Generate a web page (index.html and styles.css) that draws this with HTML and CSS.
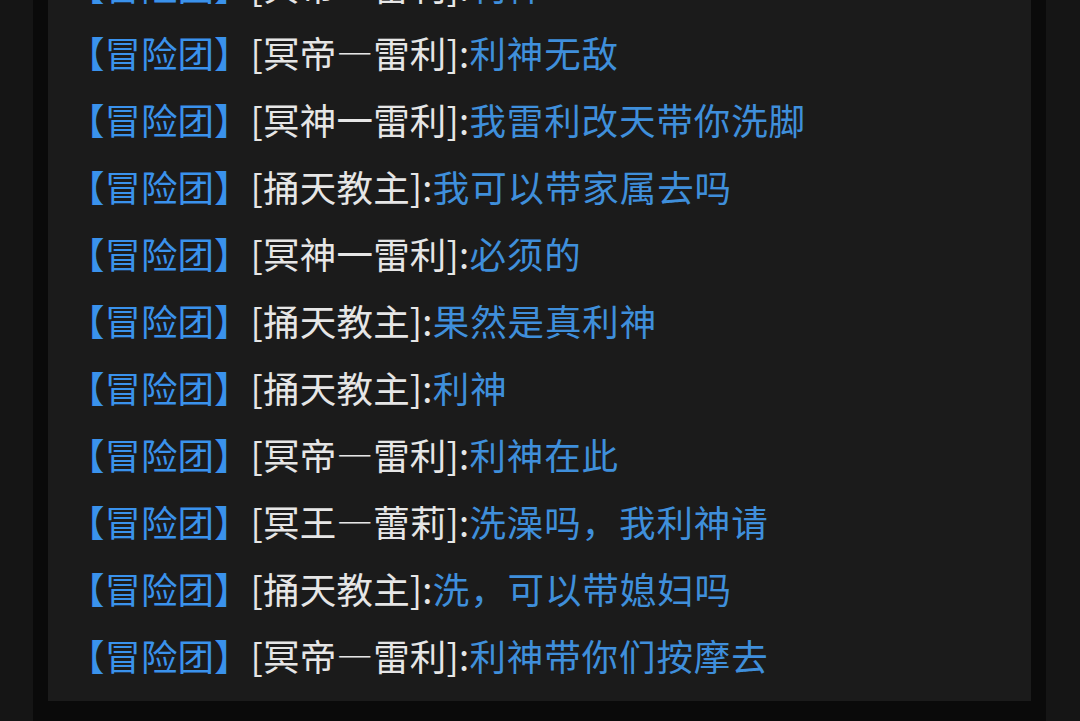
FILE: index.html
```html
<!DOCTYPE html>
<html lang="zh-CN">
<head>
  <meta charset="UTF-8">
  <meta name="viewport" content="width=device-width, initial-scale=1.0">
  <title>冒险团频道</title>
  <link rel="stylesheet" href="styles.css">
</head>
<body>
<div class="screen">
  <div class="frame">
    <div class="chat-panel">
      <div class="msg"><span class="tag">【冒险团】</span><span class="who">[冥帝—雷利]:</span><span class="text">利神</span></div>
      <div class="msg"><span class="tag">【冒险团】</span><span class="who">[冥帝—雷利]:</span><span class="text">利神无敌</span></div>
      <div class="msg"><span class="tag">【冒险团】</span><span class="who">[冥神一雷利]:</span><span class="text">我雷利改天带你洗脚</span></div>
      <div class="msg"><span class="tag">【冒险团】</span><span class="who">[捅天教主]:</span><span class="text">我可以带家属去吗</span></div>
      <div class="msg"><span class="tag">【冒险团】</span><span class="who">[冥神一雷利]:</span><span class="text">必须的</span></div>
      <div class="msg"><span class="tag">【冒险团】</span><span class="who">[捅天教主]:</span><span class="text">果然是真利神</span></div>
      <div class="msg"><span class="tag">【冒险团】</span><span class="who">[捅天教主]:</span><span class="text">利神</span></div>
      <div class="msg"><span class="tag">【冒险团】</span><span class="who">[冥帝—雷利]:</span><span class="text">利神在此</span></div>
      <div class="msg"><span class="tag">【冒险团】</span><span class="who">[冥王—蕾莉]:</span><span class="text">洗澡吗，我利神请</span></div>
      <div class="msg"><span class="tag">【冒险团】</span><span class="who">[捅天教主]:</span><span class="text">洗，可以带媳妇吗</span></div>
      <div class="msg"><span class="tag">【冒险团】</span><span class="who">[冥帝—雷利]:</span><span class="text">利神带你们按摩去</span></div>
    </div>
  </div>
</div>
</body>
</html>
```

FILE: styles.css
```css
html, body {
  margin: 0;
  height: 100%;
  overflow: hidden;
}

body {
  background-color: #151515;
  font-family: "Noto Sans CJK SC", "Noto Sans", sans-serif;
}

/* chat log is pinned to the bottom, older lines scroll off the top */
.screen {
  height: 100%;
  display: flex;
  flex-direction: column;
  justify-content: flex-end;
  padding: 0 34px 0 33px;
}

.frame {
  background-color: #0a0a0a;
  padding: 0 15px 20px 15px;
}

.chat-panel {
  background-color: #1b1b1b;
  padding: 0 20px 12px 20px;
}

.msg {
  font-size: 36.5px;
  line-height: 67px;
  white-space: nowrap;
}

.tag {
  color: #3a92ec;
}

.who {
  color: #e6e6e6;
  letter-spacing: 0.2px;
}

.text {
  color: #3f8fdb;
  letter-spacing: 0.9px;
}
```
